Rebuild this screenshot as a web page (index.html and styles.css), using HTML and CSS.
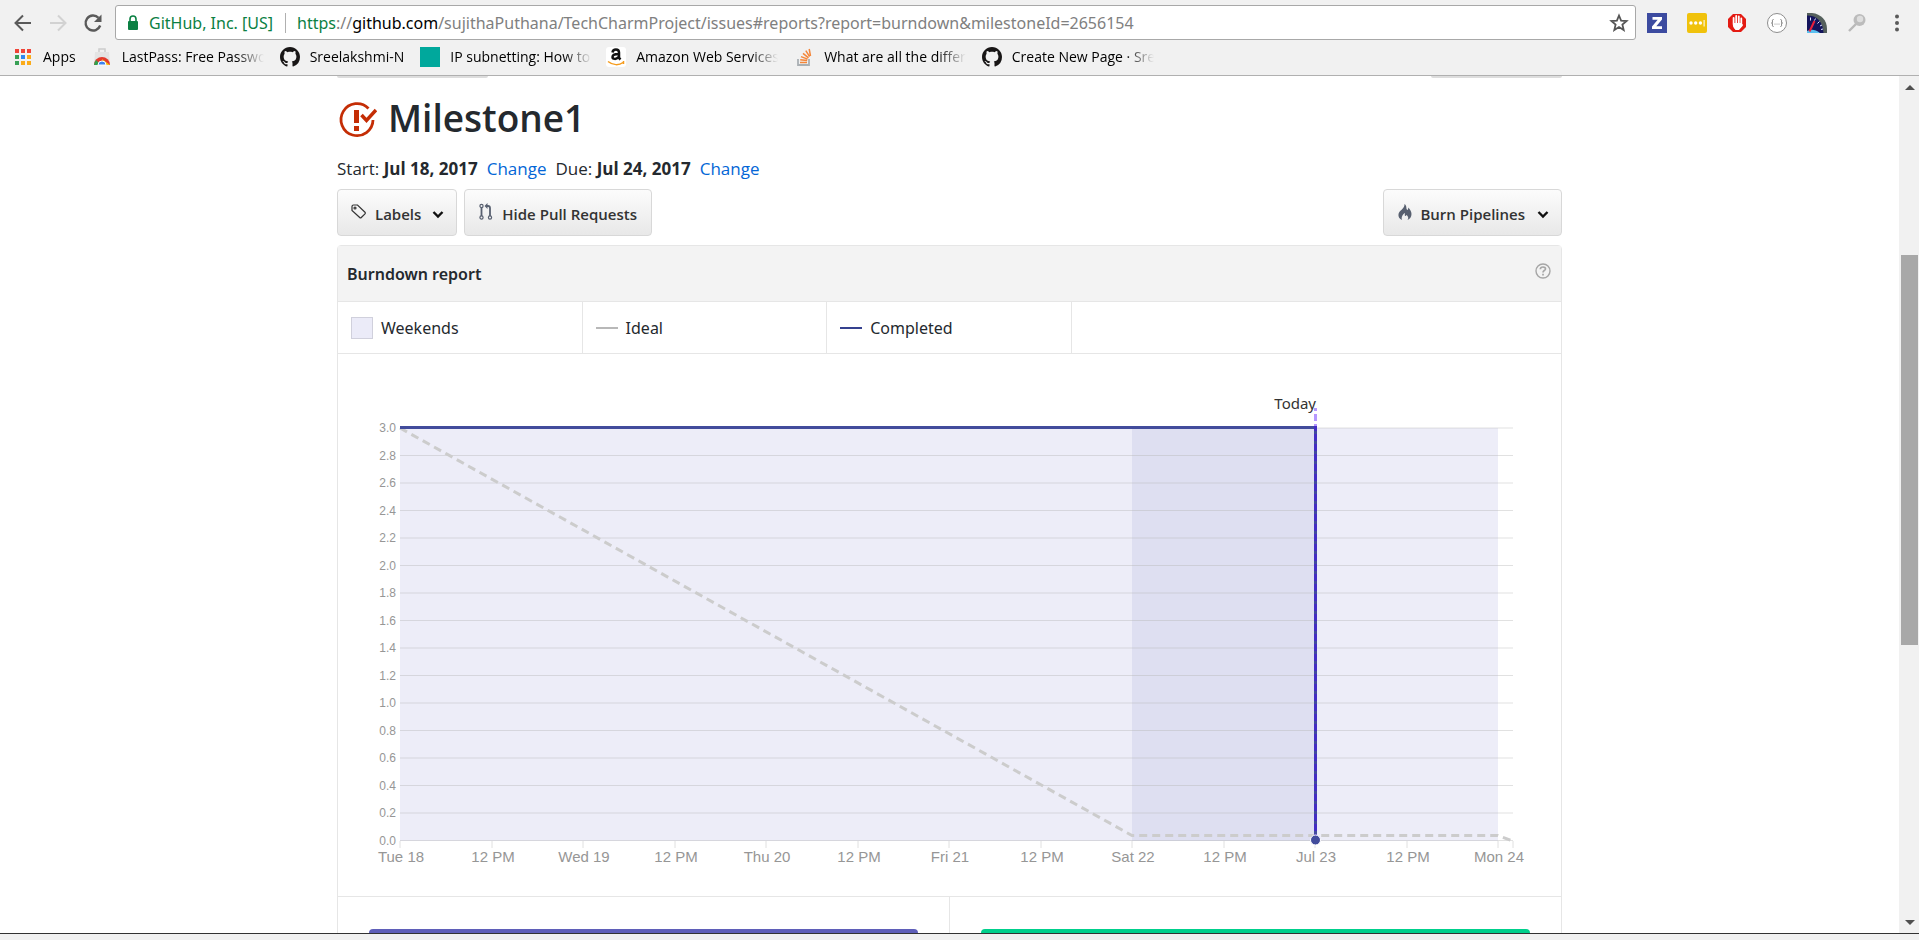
FILE: index.html
```html
<!DOCTYPE html>
<html lang="en">
<head>
<meta charset="utf-8">
<title>Milestone1 · Burndown report</title>
<link rel="stylesheet" href="styles.css">
</head>
<body>
<header class="browser">
  <div class="toolbar">
    <nav class="nav">
      <button class="icon-btn" aria-label="Back"><svg width="20" height="20" viewBox="0 0 20 20" fill="none" stroke="#5a5a5a" stroke-width="2"><path d="M18 10H3M10 2.500L2.500 10l7.500 7.500"/></svg></button>
      <button class="icon-btn" aria-label="Forward"><svg width="20" height="20" viewBox="0 0 20 20" fill="none" stroke="#d2d2d2" stroke-width="2"><path d="M2 10h15M10 2.500l7.500 7.500-7.500 7.500"/></svg></button>
      <button class="icon-btn" aria-label="Reload"><svg width="20" height="20" viewBox="0 0 20 20" fill="none" stroke="#5a5a5a" stroke-width="2.400"><path d="M17.200 12.500A7.500 7.500 0 1 1 15.500 4.800"/><path d="M18.500 1.500v7.500H11z" fill="#5a5a5a" stroke="none"/></svg></button>
    </nav>
    <div class="omnibox">
      <svg class="lock" width="12" height="16" viewBox="0 0 12 16"><rect x="1" y="6" width="10" height="9" rx="1" fill="#0b8043"/><path d="M3 7V4a3 3 0 0 1 6 0v3" fill="none" stroke="#0b8043" stroke-width="1.600"/></svg>
      <span class="owner">GitHub, Inc. [US]</span>
      <div class="url" role="textbox" aria-label="Address" contenteditable="true" spellcheck="false"><span class="scheme">https</span>://<span class="host">github.com</span>/sujithaPuthana/TechCharmProject/issues#reports?report=burndown&amp;milestoneId=2656154</div>
      <button class="icon-btn" aria-label="Bookmark this page"><svg width="20" height="20" viewBox="0 0 20 20" fill="none" stroke="#555" stroke-width="1.800"><path d="M10 2.500l2.100 5.100 5.500.400-4.200 3.600 1.300 5.400L10 14.100 5.300 17l1.300-5.400L2.400 8l5.500-.4z"/></svg></button>
    </div>
    <div class="extensions">
      <button class="icon-btn" aria-label="ZenHub"><svg width="22" height="22" viewBox="0 0 22 22"><rect x="1" y="1" width="20" height="20" fill="#3c4ba0"/><path d="M6.500 5h9.500v2.600l-5.700 6.700H16V17H6v-2.600l5.700-6.700H6.500z" fill="#fff"/></svg></button>
      <button class="icon-btn" aria-label="LastPass"><svg width="22" height="22" viewBox="0 0 22 22"><rect x="1" y="1" width="20" height="20" rx="2" fill="#f0c20c"/><g fill="#fff"><circle cx="5" cy="11" r="1.700"/><circle cx="9.700" cy="11" r="1.700"/><circle cx="14.400" cy="11" r="1.700"/><path d="M17.600 8h1v6.500h-1z"/></g></svg></button>
      <button class="icon-btn" aria-label="AdBlock"><svg width="22" height="22" viewBox="0 0 22 22"><path d="M7 2h8l5 5v8l-5 5H7l-5-5V7z" fill="#e41b13"/><path d="M7.600 12V6M10.200 11V4M12.800 11V4.500M15.300 12V6.500M7.600 12c0 3 2 5 4 5s3-2 4.500-4" fill="none" stroke="#fff" stroke-width="1.800" stroke-linecap="round"/><path d="M7.500 11h8v3l-2.500 4h-3.500l-2-3z" fill="#fff"/></svg></button>
      <button class="icon-btn" aria-label="JSON viewer"><svg width="22" height="22" viewBox="0 0 22 22"><circle cx="11" cy="11" r="9.500" fill="#fff" stroke="#8e8e8e"/><path d="M7.500 7.500c-1.500 0-1 1.500-1 2.500s-.5 1-1 1c.5 0 1 0 1 1s-.5 2.500 1 2.500M14.500 7.500c1.500 0 1 1.500 1 2.500s.5 1 1 1c-.5 0-1 0-1 1s.5 2.500-1 2.500" fill="none" stroke="#777"/><g fill="#888"><circle cx="9" cy="12" r=".6"/><circle cx="11" cy="12" r=".6"/><circle cx="13" cy="12" r=".6"/></g></svg></button>
      <button class="icon-btn" aria-label="Page speed"><svg width="22" height="22" viewBox="0 0 22 22"><path d="M1 1h5c9 1 15 7 15 16v4H1z" fill="#55605c"/><path d="M1 3.500c10 0 16 6 16.500 17.500H1z" fill="#14145c"/><path d="M1 19c4-2 8-2 13 2H1z" fill="#5bc0f0"/><path d="M3.500 19.500L8.500 9" stroke="#e8203c" stroke-width="2"/><path d="M4.500 5.500v3M9.500 6.500l-1 2M13.500 9.500l-2 2M16 13l-2 1M17 17l-2 .5" stroke="#dfe3ff"/></svg></button>
      <button class="icon-btn" aria-label="Search tool"><svg width="22" height="22" viewBox="0 0 22 22"><path d="M3 19l7-7" stroke="#b9b9b9" stroke-width="2.400"/><circle cx="13.500" cy="8" r="6" fill="#bcbcbc"/><circle cx="14" cy="7" r="3.200" fill="#dedede"/></svg></button>
      <button class="icon-btn" aria-label="Menu"><svg width="22" height="22" viewBox="0 0 22 22" fill="#5a5a5a"><circle cx="11" cy="4.500" r="2"/><circle cx="11" cy="11" r="2"/><circle cx="11" cy="17.500" r="2"/></svg></button>
    </div>
  </div>
  <nav class="bookmarks">
    <a class="bookmark" href="#"><svg width="20" height="20" viewBox="0 0 20 20"><path d="M2 2h4v4H2zM8 2h4v4H8zM14 2h4v4h-4z" fill="#f04438"/><path d="M2 8h4v4H2zM2 14h4v4H2z" fill="#38a055"/><path d="M8 8h4v4H8z" fill="#2e86f0"/><path d="M14 8h4v4h-4zM8 14h4v4H8zM14 14h4v4h-4z" fill="#fbab1a"/></svg><span class="bookmark-text">Apps</span></a>
    <a class="bookmark" href="#"><svg width="20" height="20" viewBox="0 0 20 20"><path d="M3 5h14l1 13H2z" fill="#e4e4e4"/><path d="M7 5V2h6v3" fill="none" stroke="#ccc" stroke-width="1.500"/><path d="M2 18a8 8 0 0 1 16 0z" fill="#e33b2e"/><path d="M10 12l8 6h-6z" fill="#fbc116"/><path d="M2 18a8 8 0 0 1 2-5l5 5z" fill="#34a04d"/><path d="M6 18a4 4 0 0 1 8 0z" fill="#3b82f0" stroke="#fff"/></svg><span class="bookmark-text">LastPass: Free Passwo</span></a>
    <a class="bookmark" href="#"><svg width="20" height="20" viewBox="0 0 16 16" fill="#181616"><path d="M8 0C3.580 0 0 3.580 0 8c0 3.540 2.290 6.530 5.470 7.590.4.070.55-.17.55-.38 0-.19-.01-.82-.01-1.490-2.010.37-2.530-.49-2.690-.94-.09-.23-.48-.94-.82-1.130-.28-.15-.68-.52-.01-.53.63-.01 1.080.58 1.230.82.72 1.210 1.870.87 2.330.66.07-.52.28-.87.51-1.070-1.780-.2-3.640-.89-3.640-3.950 0-.87.31-1.590.82-2.150-.08-.2-.36-1.020.08-2.120 0 0 .67-.21 2.200.82.64-.18 1.320-.27 2-.27s1.360.09 2 .27c1.530-1.040 2.200-.82 2.200-.82.44 1.100.16 1.920.08 2.120.51.56.82 1.270.82 2.150 0 3.070-1.870 3.750-3.650 3.950.29.25.54.73.54 1.480 0 1.070-.01 1.930-.01 2.200 0 .21.15.46.55.38A8.010 8.010 0 0 0 16 8c0-4.420-3.580-8-8-8z"/></svg><span class="bookmark-text">Sreelakshmi-N</span></a>
    <a class="bookmark" href="#"><svg width="20" height="20" viewBox="0 0 20 20"><path d="M0 0h20v20H0z" fill="#00a89c"/></svg><span class="bookmark-text">IP subnetting: How to</span></a>
    <a class="bookmark" href="#"><svg width="20" height="20" viewBox="0 0 20 20"><rect width="20" height="20" rx="3" fill="#fff"/><path d="M6.500 5.500C7 1.500 13 1.500 13 5.500V11l1.500 1.500M12.500 7C8 7 6.500 8 6.500 10s3.500 3 6 0" fill="none" stroke="#111" stroke-width="2.500"/><path d="M2 14.500c5 4 11 4 15 1M17.500 14v3" fill="none" stroke="#f59b1c" stroke-width="1.500"/></svg><span class="bookmark-text">Amazon Web Services</span></a>
    <a class="bookmark" href="#"><svg width="20" height="20" viewBox="0 0 20 20" fill="none"><path d="M4 12v6h11v-6" stroke="#aab0b4" stroke-width="1.800"/><path d="M6 15.500h7M6.200 12.700l7 .9M7 9.600l6.600 2.500M9 6.300l5.500 4.500M11.800 3.600l3.800 6M15.200 2l1.300 7" stroke="#f4863a" stroke-width="1.500"/></svg><span class="bookmark-text">What are all the differ</span></a>
    <a class="bookmark" href="#"><svg width="20" height="20" viewBox="0 0 16 16" fill="#181616"><path d="M8 0C3.580 0 0 3.580 0 8c0 3.540 2.290 6.530 5.470 7.590.4.070.55-.17.55-.38 0-.19-.01-.82-.01-1.490-2.010.37-2.530-.49-2.690-.94-.09-.23-.48-.94-.82-1.130-.28-.15-.68-.52-.01-.53.63-.01 1.080.58 1.230.82.72 1.210 1.870.87 2.330.66.07-.52.28-.87.51-1.070-1.780-.2-3.640-.89-3.640-3.950 0-.87.31-1.590.82-2.150-.08-.2-.36-1.020.08-2.120 0 0 .67-.21 2.200.82.64-.18 1.320-.27 2-.27s1.360.09 2 .27c1.530-1.040 2.200-.82 2.200-.82.44 1.100.16 1.920.08 2.120.51.56.82 1.270.82 2.150 0 3.070-1.870 3.750-3.650 3.950.29.25.54.73.54 1.480 0 1.070-.01 1.930-.01 2.200 0 .21.15.46.55.38A8.010 8.010 0 0 0 16 8c0-4.420-3.580-8-8-8z"/></svg><span class="bookmark-text">Create New Page · Sre</span></a>
  </nav>
</header>

<div class="viewport">
  <main class="page">
    <div class="content">
      <div class="stubs"><span class="stub"></span><span class="stub stub-right"></span></div>
      <h1 class="title">
        <svg width="40" height="46" viewBox="0 -6 40 46" fill="none" stroke="#c42d05" stroke-width="2.800"><path d="M31.500 7.500A16 16 0 1 0 36 19"/><path d="M24.500 14l5 5.500 9.500-10.500" stroke-width="3.500"/><path d="M19.500 9v13M19.500 25v5" stroke-width="5"/></svg>
        <span>Milestone1</span>
      </h1>
      <p class="dates"><span>Start: <strong>Jul 18, 2017</strong></span><a href="#">Change</a><span>Due: <strong>Jul 24, 2017</strong></span><a href="#">Change</a></p>
      <div class="actions">
        <button class="btn"><svg width="18" height="18" viewBox="0 0 18 18" fill="none" stroke="#333" stroke-width="1.200"><path d="M2 3.500q0-1.500 1.500-1.500h4l7.500 7.200q.8.800 0 1.600l-3.700 3.700q-.8.800-1.600 0L2 7.500z"/><circle cx="5" cy="5" r="1"/></svg><span>Labels</span><svg class="caret" width="12" height="12" viewBox="0 0 12 12" fill="none" stroke="#111" stroke-width="2.400"><path d="M1.500 4L6 8.500 10.500 4"/></svg></button>
        <button class="btn btn-wide"><svg width="14" height="18" viewBox="0 0 14 18" fill="none" stroke="#586070" stroke-width="1.200"><circle cx="2.500" cy="3" r="1.600"/><circle cx="2.500" cy="14.500" r="1.600"/><circle cx="11" cy="14.500" r="1.600"/><path d="M2.500 5v8M11 13V5q0-2-2-2H7" stroke-width="1.800"/><path d="M8.500 0v6L5.500 3z" fill="#586070" stroke="none"/></svg><span>Hide Pull Requests</span></button>
        <button class="btn btn-last"><svg width="14" height="18" viewBox="0 0 14 18" fill="#586070"><path d="M6.500 1c3 2 1 5 3 6 .8-.5.800-1.500.5-2.500 2 1.500 3.500 4 3.500 6.500 0 3-1.500 5-4 6 1.500-2 .5-4-1-5-.5 1-1 1.200-1.500 1-.5-1 0-2-.2-3-2 1.500-3.800 4-2.800 7-2.500-1-4-3-3.500-6C1 7.500 7 5.500 6.500 1z"/></svg><span>Burn Pipelines</span><svg class="caret" width="12" height="12" viewBox="0 0 12 12" fill="none" stroke="#111" stroke-width="2.400"><path d="M1.500 4L6 8.500 10.500 4"/></svg></button>
      </div>

      <section class="card">
        <header class="card-head">
          <h2>Burndown report</h2>
          <button class="icon-btn" aria-label="Help"><svg width="18" height="18" viewBox="0 0 18 18" fill="none" stroke="#a6a6a6"><circle cx="9" cy="9" r="7" stroke-width="1.400"/><path d="M6.300 7.200c.2-3 5.400-2.800 5.200-.2C11.400 8.600 9 8.500 9 10.400" stroke-width="1.700"/><path d="M9 11.700v1.700" stroke-width="1.700"/></svg></button>
        </header>
        <ul class="legend">
          <li><i class="swatch"></i>Weekends</li>
          <li><i class="dash"></i>Ideal</li>
          <li><i class="dash dash-done"></i>Completed</li>
        </ul>
        <div class="chart">
          <svg id="chart" viewBox="0 0 1223 542" role="img" aria-label="Burndown chart"></svg>
        </div>
        <div class="summary">
          <div class="summary-cell"><div class="bar"></div></div>
          <div class="summary-cell"><div class="bar bar-green"></div></div>
        </div>
      </section>
    </div>
  </main>
  <div class="scrollbar">
    <svg width="20" height="22" viewBox="0 0 20 22"><path d="M6 14l5-5 5 5z" fill="#505050"/></svg>
    <div class="track"><div class="thumb"></div></div>
    <svg width="20" height="22" viewBox="0 0 20 22"><path d="M6 9l5 5 5-5z" fill="#505050"/></svg>
  </div>
</div>
<footer class="status"></footer>
<script src="chart.js"></script>
</body>
</html>
```
FILE: styles.css
```css
* { box-sizing: border-box; }

body {
  margin: 0;
  height: 100vh;
  display: flex;
  flex-direction: column;
  overflow: hidden;
  background: #fff;
  color: #24292e;
  font-family: "Open Sans", "Noto Sans", sans-serif;
  font-size: 16px;
}

button { font: inherit; color: inherit; cursor: pointer; }
svg { display: block; flex: none; }
a { color: #0366d6; text-decoration: none; }

.icon-btn {
  display: flex;
  padding: 0;
  border: 0;
  background: none;
}

/* Browser frame */
.browser {
  flex: none;
  background: #f1f1f1;
  border-bottom: 1px solid #b0b0b0;
}

.toolbar {
  display: flex;
  align-items: center;
  height: 45px;
  padding-right: 2px;
}

.nav {
  display: flex;
  gap: 15px;
  padding: 0 12px 0 13px;
}

.omnibox {
  flex: 1;
  display: flex;
  align-items: center;
  height: 35px;
  padding: 0 6px 0 11px;
  background: #fff;
  border: 1px solid #a8a8a8;
  border-radius: 3px;
  font-family: "Noto Sans", "Open Sans", sans-serif;
  white-space: nowrap;
}

.owner {
  padding: 0 12px 0 10px;
  margin-right: 11px;
  border-right: 1px solid #b0b0b0;
  color: #0b8043;
  line-height: 20px;
}

.lock { width: 12px; }

.url {
  flex: 1;
  min-width: 0;
  overflow: hidden;
  color: #808080;
  outline: 0;
}

.scheme { color: #0b8043; }
.host { color: #000; }

.extensions { display: flex; padding-left: 1px; }
.extensions .icon-btn { width: 40px; justify-content: center; }

.bookmarks {
  display: flex;
  gap: 16px;
  height: 30px;
  padding-left: 13px;
  align-items: flex-start;
}

.bookmark {
  display: flex;
  align-items: center;
  gap: 10px;
  height: 23px;
  color: #000;
  font-size: 14px;
}

.bookmark-text {
  max-width: 142px;
  overflow: hidden;
  white-space: nowrap;
  mask-image: linear-gradient(to right, #000 114px, transparent 142px);
}

/* Page */
.viewport {
  flex: 1;
  min-height: 0;
  display: flex;
}

.page {
  flex: 1;
  overflow: hidden;
}

.content {
  max-width: 1225px;
  margin: 0 auto;
}

.stubs {
  display: flex;
  justify-content: space-between;
}

.stub {
  width: 151px;
  height: 2px;
  background: #ddd;
  border-radius: 0 0 3px 3px;
}

.stub-right { width: 131px; }

.title {
  display: flex;
  align-items: center;
  gap: 11px;
  margin: 12px 0 0;
  font-size: 37px;
  font-weight: 600;
  line-height: 56px;
}

.dates {
  display: flex;
  gap: 9px;
  margin: 11px 0 0;
  font-size: 17px;
  line-height: 24px;
}

.dates strong { font-weight: 700; }

.actions {
  display: flex;
  gap: 7px;
  margin-top: 8px;
}

.btn {
  display: flex;
  align-items: center;
  gap: 7px;
  height: 47px;
  padding: 2px 12px 0;
  border: 1px solid #d8d8d8;
  border-radius: 4px;
  background: linear-gradient(#fcfcfc, #e8e8e8);
  color: #333;
  font-size: 15px;
  font-weight: 600;
}

.btn svg { margin-bottom: 3px; }
.btn .caret { margin: 0 0 0 4px; }
.btn-wide { gap: 9px; padding: 2px 14px 0; }
.btn-last { gap: 8px; padding-left: 14px; margin-left: auto; }

.card {
  margin-top: 9px;
  border: 1px solid #e6e6e6;
  border-radius: 4px 4px 0 0;
  font-family: "Noto Sans", "Open Sans", sans-serif;
}

.card-head {
  display: flex;
  align-items: center;
  justify-content: space-between;
  height: 56px;
  padding: 0 9px;
  background: #f3f3f3;
  border-bottom: 1px solid #e6e6e6;
}

.card-head h2 {
  margin: 0;
  font-size: 16px;
  font-weight: 600;
}

.card-head .icon-btn { padding-bottom: 6px; }

.legend {
  display: grid;
  grid-template-columns: repeat(5, 1fr);
  height: 52px;
  margin: 0;
  padding: 0;
  list-style: none;
  border-bottom: 1px solid #e6e6e6;
}

.legend li {
  display: flex;
  align-items: center;
  gap: 8px;
  padding-left: 13px;
  border-right: 1px solid #e6e6e6;
}

.swatch {
  width: 22px;
  height: 22px;
  background: #ebebf8;
  border: 1px solid #d0d0dc;
}

.dash {
  width: 22px;
  height: 2px;
  background: #b8b8b8;
}

.dash-done { background: #35418f; }

.chart { border-bottom: 1px solid #e6e6e6; }
.chart svg { width: 100%; height: auto; }

.axis {
  fill: #969696;
  font-family: "Liberation Sans", Arial, sans-serif;
}

.axis-y { font-size: 12px; text-anchor: end; }
.axis-x { font-size: 15px; text-anchor: middle; }
.today { font-size: 15px; fill: #333; text-anchor: end; }
.grid { stroke: #b4b4b4; stroke-opacity: .4; }
.tick { stroke: #e0e0e0; }
.weekend { fill: #3232b4; fill-opacity: .09; }
.weekend-now { fill: #3246a8; fill-opacity: .08; }
.ideal { fill: none; stroke: #ccc; stroke-width: 3; stroke-dasharray: 8 5; }
.done { fill: none; stroke: #424c9c; stroke-width: 3; }
.now { stroke: #4600ff; stroke-opacity: .4; stroke-width: 3; stroke-dasharray: 7 3; }
.now-dot { fill: #424c9c; stroke: #fff; }

.summary {
  display: grid;
  grid-template-columns: 1fr 1fr;
}

.summary-cell {
  height: 120px;
  padding: 32px 31px;
}

.summary-cell:first-child { border-right: 1px solid #e6e6e6; }

.bar {
  height: 40px;
  background: #5f5fb9;
  border-radius: 4px;
}

.bar-green { background: #00d08c; }

.scrollbar {
  flex: none;
  display: flex;
  flex-direction: column;
  width: 20px;
  background: #f1f1f1;
}

.track { flex: 1; }

.thumb {
  width: 17px;
  height: 48%;
  margin: 157px 0 0 2px;
  background: #a8a8a8;
}

.status {
  flex: none;
  height: 7px;
  background: #f1f1f1;
  border-top: 1px solid #333;
}
```
FILE: chart.js
```js
const svg = document.getElementById("chart");
const left = 62, right = 1175, top3 = 74, base = 487;
const halfDay = 91.5;

function add(tag, attrs, text) {
  const node = document.createElementNS("http://www.w3.org/2000/svg", tag);
  for (const key in attrs) node.setAttribute(key, attrs[key]);
  if (text) node.textContent = text;
  svg.appendChild(node);
}

const xAt = (step) => Math.round(left + step * halfDay);
const yAt = (value) => base - (value / 3) * (base - top3);

add("rect", { class: "weekend", x: left, y: top3, width: xAt(12) - left, height: base - top3 });
add("rect", { class: "weekend-now", x: xAt(8), y: top3, width: xAt(10) - xAt(8), height: base - top3 });

for (let i = 0; i <= 15; i++) {
  const value = i / 5;
  const y = Math.round(yAt(value)) - (i % 2 ? 0 : .5);
  add("line", { class: "grid", x1: left, x2: right, y1: y, y2: y });
  add("text", { class: "axis axis-y", x: left - 4, y: y + 4 }, value.toFixed(1));
}

const labels = ["Tue 18", "12 PM", "Wed 19", "12 PM", "Thu 20", "12 PM", "Fri 21",
  "12 PM", "Sat 22", "12 PM", "Jul 23", "12 PM", "Mon 24"];
labels.forEach((label, i) => {
  add("line", { class: "tick", x1: xAt(i), x2: xAt(i), y1: base, y2: base + 7 });
  add("text", { class: "axis axis-x", x: xAt(i) + 1, y: base + 21 }, label);
});
add("line", { class: "tick", x1: right, x2: right, y1: base, y2: base + 7 });

add("path", { class: "ideal", d: `M${left} ${top3}L${xAt(8)} ${base - 5.5}H${xAt(12)}L${right} ${base}` });
add("path", { class: "done", d: `M${left} ${top3 - .5}H${xAt(10) + .5}V${base}` });
add("line", { class: "now", x1: xAt(10) + .5, x2: xAt(10) + .5, y1: base, y2: 54 });
add("circle", { class: "now-dot", cx: xAt(10) + .5, cy: base - 1, r: 5 });
add("text", { class: "today", x: xAt(10) + 1, y: 55 }, "Today");
```
